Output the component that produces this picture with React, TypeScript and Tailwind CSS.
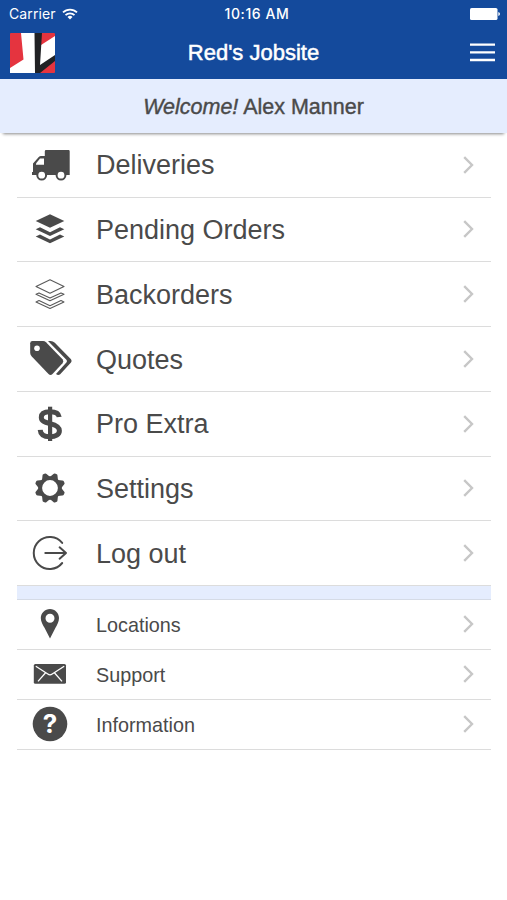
import type { ReactNode } from 'react';

function Icon({ children }: { children: ReactNode }) {
  return (
    <svg viewBox="0 0 48 48" className="size-12 shrink-0" fill="#4a4a4a" aria-hidden="true">
      {children}
    </svg>
  );
}

const layers = [
  'M24 9.2 38.3 16 24 22.8 9.7 16Z',
  'M9.7 24.2 14 22.3 24 27.2 34 22.3 38.3 24.2 24 31Z',
  'M9.7 31.5 14 29.6 24 34.5 34 29.6 38.3 31.5 24 38.3Z',
];

const outlineLayers = [
  'M24 9.7 38 16.4 24 23.3 10 16.4Z',
  'M10 24.2 13 22.9 24 28.1 35 22.9 38 24.2 24 30.8Z',
  'M10 31.9 13 30.6 24 35.8 35 30.6 38 31.9 24 38.5Z',
];

const truckIcon = (
  <Icon>
    <path d="M20 9H42.5Q43.7 9 43.7 10.2V34H6V31H7V22.5L13 15.8Q13.7 15 15 15H18.8V10.2Q18.8 9 20 9Z" />
    <path d="M10 23.8V22.6L14 17.6H18V23.8Z" fill="#fff" />
    <circle cx="15.7" cy="34.2" r="4.4" fill="#fff" stroke="#4a4a4a" strokeWidth="2" />
    <circle cx="35" cy="34.2" r="4.4" fill="#fff" stroke="#4a4a4a" strokeWidth="2" />
  </Icon>
);

const layersIcon = (
  <Icon>
    {layers.map((d) => (
      <path key={d} d={d} />
    ))}
  </Icon>
);

const layersOutlineIcon = (
  <Icon>
    {outlineLayers.map((d) => (
      <path key={d} d={d} fill="none" stroke="#5a5a5a" strokeWidth="1.1" strokeLinejoin="round" />
    ))}
  </Icon>
);

const tagsIcon = (
  <Icon>
    <path d="M6.5 6H17Q18.8 6 20 7.2L36.5 24.3Q38.3 26.2 36.5 28.2L26.5 39Q24.5 41 22.5 39L5.8 21.5Q4.2 19.8 4.2 18V8.3Q4.2 6 6.5 6Z" />
    <circle cx="11" cy="13.2" r="2.8" fill="#fff" />
    <path d="M22 6H24.5Q27 6 28.8 7.8L45 24.3Q46.3 26 45 27.6L34.2 39.2Q32.3 40.8 30 39L40.6 27.2Q41.5 26 40.4 24.8Z" />
  </Icon>
);

const dollarIcon = (
  <Icon>
    <path
      d="M33.2 17C32.6 12.8 29 11.7 24 11.7C18.4 11.7 15.3 13.6 15.3 17.2C15.3 21.3 18.8 22.2 24 23.6C30 25 33.4 26.8 33.4 30.8C33.4 34.6 29.6 36.7 24 36.7C18 36.7 14.5 34.5 14.2 29.8"
      fill="none"
      stroke="#4a4a4a"
      strokeWidth="5"
    />
    <path d="M22 6.7H26.2V41H22Z" />
  </Icon>
);

const gearIcon = (
  <Icon>
    <circle cx="24" cy="24" r="9.8" fill="none" stroke="#4a4a4a" strokeWidth="3.8" />
    {[22.5, 67.5, 112.5, 157.5, 202.5, 247.5, 292.5, 337.5].map((angle) => (
      <path key={angle} d="M19.6 13.8 21.8 9.7Q22.2 8.7 23 8.7H25Q25.8 8.7 26.2 9.7L28.4 13.8Z" transform={`rotate(${angle} 24 24)`} />
    ))}
  </Icon>
);

const logoutIcon = (
  <Icon>
    <g fill="none" stroke="#4a4a4a" strokeWidth="2" strokeLinecap="round" strokeLinejoin="round">
      <path d="M36.2 13.9A16 16 0 1 0 36.2 34" />
      <path d="M19.3 24H40M33.6 18.3 40 24 33.6 29.7" />
    </g>
  </Icon>
);

const pinIcon = (
  <Icon>
    <path
      fillRule="evenodd"
      d="M24 9C29 9 33 13 33 18C33 22 31 25 29.5 27.8L24 38.5 18.5 27.8C17 25 14.8 22 14.8 18C14.8 13 19 9 24 9ZM24 13.7A4.5 4.5 0 1 0 24 22.7A4.5 4.5 0 1 0 24 13.7Z"
    />
  </Icon>
);

const mailIcon = (
  <Icon>
    <rect x="7.8" y="14" width="32.2" height="19.8" rx="1.6" />
    <path d="M9.8 16.2 21.8 24Q24 25.6 26.2 24L38.2 16.2M12 31.4 19.6 22.8M36 31.4 28.4 22.8" fill="none" stroke="#fff" strokeWidth="1.3" />
  </Icon>
);

const helpIcon = (
  <Icon>
    <circle cx="24" cy="24" r="17.3" />
    <text x="24" y="33.4" textAnchor="middle" fill="#fff" fontSize="26" fontWeight="700" fontFamily="Inter, sans-serif">
      ?
    </text>
  </Icon>
);

const mainItems = [
  { label: 'Deliveries', icon: truckIcon },
  { label: 'Pending Orders', icon: layersIcon },
  { label: 'Backorders', icon: layersOutlineIcon },
  { label: 'Quotes', icon: tagsIcon },
  { label: 'Pro Extra', icon: dollarIcon },
  { label: 'Settings', icon: gearIcon },
  { label: 'Log out', icon: logoutIcon },
];

const secondaryItems = [
  { label: 'Locations', icon: pinIcon },
  { label: 'Support', icon: mailIcon },
  { label: 'Information', icon: helpIcon },
];

function Chevron() {
  return (
    <svg viewBox="0 0 12 20" className="mr-[17.5px] ml-auto h-5 w-3" fill="none" stroke="#c7c7c7" strokeWidth="2.4" aria-hidden="true">
      <path d="M2.2 2.2 10 10 2.2 17.8" />
    </svg>
  );
}

function MenuRow({ label, icon, small }: { label: string; icon: ReactNode; small?: boolean }) {
  return (
    <li className={`flex items-center border-b border-[#dcdcdc] pl-[9px] ${small ? 'h-[50px]' : 'h-[64.75px]'}`}>
      {icon}
      <span className={`ml-[22px] text-[#4a4a4a] ${small ? 'pt-[3px] text-[19.8px]' : 'pt-0.5 text-[27px]'}`}>{label}</span>
      <Chevron />
    </li>
  );
}

function StatusBar() {
  return (
    <div className="grid h-[27px] grid-cols-3 items-center pr-[7px] pl-[9px] font-['Inter',sans-serif] text-[14px] text-white">
      <div className="flex items-center gap-1.5">
        <span className="tracking-[0.1px]">Carrier</span>
        <svg viewBox="0 0 16 12" className="h-3 w-4" fill="none" stroke="#fff" strokeWidth="1.8" aria-hidden="true">
          <path d="M1 4.4A10 10 0 0 1 15 4.4M3.5 7.2A6.4 6.4 0 0 1 12.5 7.2" />
          <path d="M8 11.6 5.5 9A3.5 3.5 0 0 1 10.5 9Z" fill="#fff" stroke="none" />
        </svg>
      </div>
      <span className="pl-[5px] text-center font-medium tracking-[0.6px] whitespace-nowrap">10:16 AM</span>
      <svg viewBox="0 0 30 12" className="h-3 w-[30px] justify-self-end" fill="#fff" aria-hidden="true">
        <rect width="27.5" height="12" rx="1.6" />
        <path d="M28.3 4Q30 4.5 30 6T28.3 8Z" />
      </svg>
    </div>
  );
}

function Logo() {
  return (
    <svg viewBox="0 0 45 40" className="h-10 w-[45px]" aria-hidden="true">
      <rect width="45" height="40" rx="1" fill="#e5343f" />
      <path d="M11 0H25V40H0V35L13.5 26.5Z" fill="#fff" />
      <path d="M45 3V23L29.5 35V13Z" fill="#fff" />
      <path d="M24.5 0H32L30 32 45 22V28L30 40H25Z" fill="#202124" />
    </svg>
  );
}

export default function App() {
  return (
    <div className="min-h-screen w-full bg-white font-['Liberation_Sans',Arial,sans-serif]">
      <header className="h-[79px] bg-[#144a9c]">
        <StatusBar />
        <div className="flex h-[51px] items-center justify-between pr-3 pl-2.5">
          <Logo />
          <h1 className="ml-[-18px] text-[22px] text-white [-webkit-text-stroke:0.5px_#fff]">Red's Jobsite</h1>
          <svg viewBox="0 0 25 20" className="h-5 w-[25px]" fill="#fff" aria-hidden="true">
            <path d="M0 0.4H25V2.8H0ZM0 8.2H25V10.6H0ZM0 15.8H25V18.2H0Z" />
          </svg>
        </div>
      </header>
      <div className="flex h-[53.75px] items-center justify-center bg-[#e5edfe] pt-0.5 text-[21.5px] text-[#4a4a4a] shadow-[0_4px_3px_-3px_#888] [-webkit-text-stroke:0.4px_#4a4a4a]">
        <p>
          <em>Welcome!</em> Alex Manner
        </p>
      </div>
      <main className="pr-4 pl-[17px]">
        <ul>
          {mainItems.map((item) => (
            <MenuRow key={item.label} {...item} />
          ))}
        </ul>
        <div className="h-[13.5px] border-b border-[#d5dbe6] bg-[#e5edfe]" />
        <ul>
          {secondaryItems.map((item) => (
            <MenuRow key={item.label} {...item} small />
          ))}
        </ul>
      </main>
    </div>
  );
}
